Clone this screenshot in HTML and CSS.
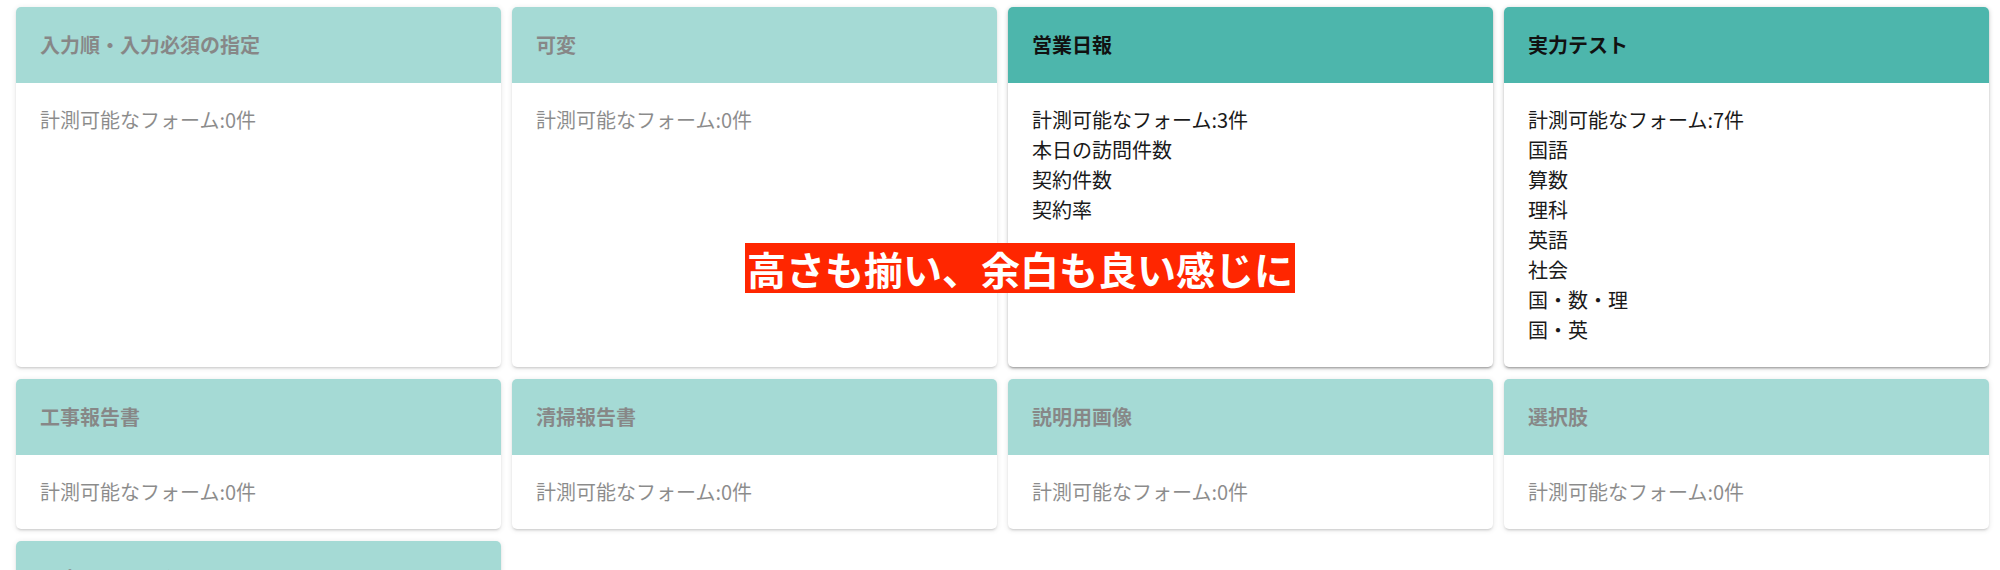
FILE: index.html
```html
<!DOCTYPE html>
<html lang="ja">
<head>
<meta charset="utf-8">
<title>フォーム一覧</title>
<link rel="stylesheet" href="styles.css">
</head>
<body>
<div class="grid">
  <div class="card dim">
    <div class="card-head">入力順・入力必須の指定</div>
    <div class="card-body"><div>計測可能なフォーム:0件</div></div>
  </div>
  <div class="card dim">
    <div class="card-head">可変</div>
    <div class="card-body"><div>計測可能なフォーム:0件</div></div>
  </div>
  <div class="card">
    <div class="card-head">営業日報</div>
    <div class="card-body">
      <div>計測可能なフォーム:3件</div>
      <div>本日の訪問件数</div>
      <div>契約件数</div>
      <div>契約率</div>
    </div>
  </div>
  <div class="card">
    <div class="card-head">実力テスト</div>
    <div class="card-body">
      <div>計測可能なフォーム:7件</div>
      <div>国語</div>
      <div>算数</div>
      <div>理科</div>
      <div>英語</div>
      <div>社会</div>
      <div>国・数・理</div>
      <div>国・英</div>
    </div>
  </div>
  <div class="card dim">
    <div class="card-head">工事報告書</div>
    <div class="card-body"><div>計測可能なフォーム:0件</div></div>
  </div>
  <div class="card dim">
    <div class="card-head">清掃報告書</div>
    <div class="card-body"><div>計測可能なフォーム:0件</div></div>
  </div>
  <div class="card dim">
    <div class="card-head">説明用画像</div>
    <div class="card-body"><div>計測可能なフォーム:0件</div></div>
  </div>
  <div class="card dim">
    <div class="card-head">選択肢</div>
    <div class="card-body"><div>計測可能なフォーム:0件</div></div>
  </div>
  <div class="card dim">
    <div class="card-head">写真・チェック項目</div>
    <div class="card-body"><div>計測可能なフォーム:0件</div></div>
  </div>
</div>
<div class="note">高さも揃い、余白も良い感じに</div>
</body>
</html>
```

FILE: styles.css
```css
html, body {
  margin: 0;
  padding: 0;
  background: #ffffff;
}

body {
  font-family: "Noto Sans CJK JP", "Noto Sans", sans-serif;
  color: #222222;
  position: relative;
}

.grid {
  display: grid;
  grid-template-columns: repeat(4, 1fr);
  gap: 12px 11px;
  padding: 7px 11px 0 16px;
  align-items: stretch;
}

.card {
  background: #ffffff;
  border-radius: 5px;
  overflow: hidden;
  box-shadow: 0 2px 2px 0 rgba(0, 0, 0, 0.14),
              0 3px 1px -2px rgba(0, 0, 0, 0.12),
              0 1px 5px 0 rgba(0, 0, 0, 0.2);
  display: flex;
  flex-direction: column;
}

.card.dim {
  opacity: 0.5;
}

.card-head {
  background: #4db6ac;
  color: #111111;
  font-weight: 700;
  font-size: 20px;
  line-height: 30px;
  padding: 23px 24px;
}

.card-body {
  flex: 1;
  padding: 22px 24px;
  font-size: 20px;
  line-height: 30px;
  color: #1a1a1a;
}

.note {
  position: absolute;
  left: 745px;
  top: 243px;
  height: 50px;
  background: #ff2600;
  color: #ffffff;
  font-weight: 700;
  font-size: 39px;
  line-height: 50px;
  padding: 0 2px;
  white-space: nowrap;
}
```
